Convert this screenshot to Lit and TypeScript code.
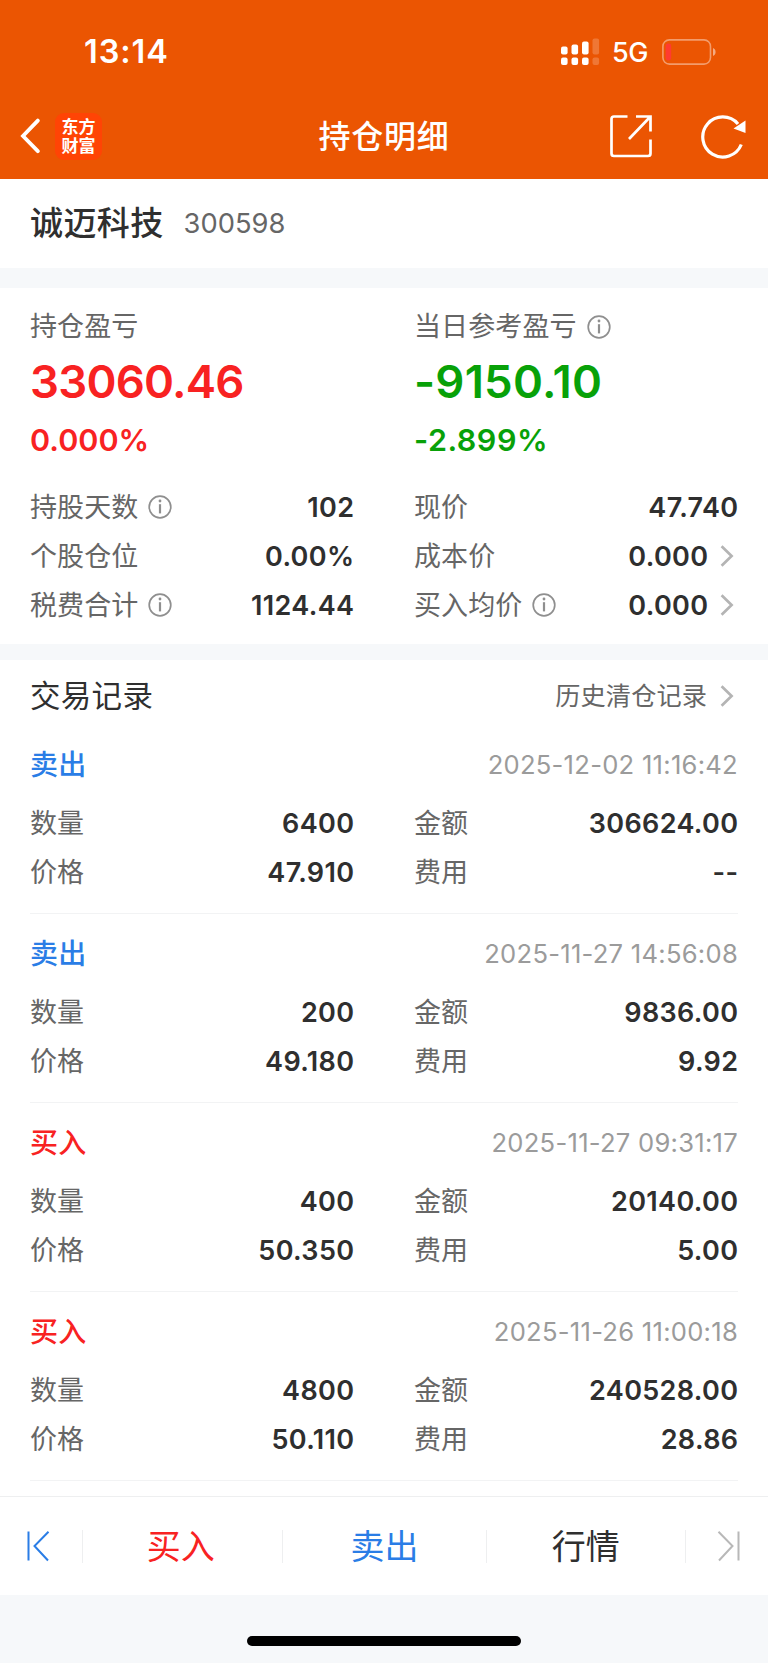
import { LitElement, html, css, svg, nothing } from "lit";
import { customElement } from "lit/decorators.js";

interface Field {
  label: string;
  value: string;
  info?: boolean;
  link?: boolean;
}
interface Trade {
  side: "buy" | "sell";
  time: string;
  qty: string;
  amount: string;
  price: string;
  fee: string;
}

const HOLDING: Field[] = [
  { label: "持股天数", value: "102", info: true },
  { label: "现价", value: "47.740" },
  { label: "个股仓位", value: "0.00%" },
  { label: "成本价", value: "0.000", link: true },
  { label: "税费合计", value: "1124.44", info: true },
  { label: "买入均价", value: "0.000", info: true, link: true },
];

const TRADES: Trade[] = [
  { side: "sell", time: "2025-12-02 11:16:42", qty: "6400", amount: "306624.00", price: "47.910", fee: "--" },
  { side: "sell", time: "2025-11-27 14:56:08", qty: "200", amount: "9836.00", price: "49.180", fee: "9.92" },
  { side: "buy", time: "2025-11-27 09:31:17", qty: "400", amount: "20140.00", price: "50.350", fee: "5.00" },
  { side: "buy", time: "2025-11-26 11:00:18", qty: "4800", amount: "240528.00", price: "50.110", fee: "28.86" },
];

const infoIcon = html`<svg class="info" width="24" height="24" viewBox="0 0 24 24" fill="none" stroke="#8f8f8f" stroke-width="1.7">
  <circle cx="12" cy="12" r="10.8" />
  <path d="M12 9.2v9.2" stroke-width="2.2" />
  <circle cx="12" cy="6" r="1.4" fill="#8f8f8f" stroke="none" />
</svg>`;

const chevron = html`<svg class="chevron" width="32" height="24" viewBox="0 0 32 24" fill="none" stroke="#b4b4b4" stroke-width="2.7">
  <path d="M13.6 2.2 23.6 12 13.6 21.8" />
</svg>`;

@customElement("app-root")
export class AppRoot extends LitElement {
  static styles = css`
    :host {
      display: flex;
      flex-direction: column;
      height: 1663px;
      background: #f6f8fa;
      color: #2f2f2f;
      font-family: Inter, "Noto Sans CJK SC", sans-serif;
      font-size: 27px;
    }
    svg { display: block; flex: none; }
    header { background: #eb5502; color: #fff; height: 179px; box-sizing: border-box; }
    .status { display: flex; align-items: center; height: 103px; padding: 0 52px 0 84px; }
    .clock { flex: 1; font-size: 32.5px; font-weight: 600; line-height: 40px; letter-spacing: 0.9px; }
    .net { font-size: 27px; font-weight: 500; line-height: 40px; margin: 2px 14px 0 12px; letter-spacing: -0.4px; }
    .nav { display: grid; grid-template-columns: 1fr auto 1fr; align-items: center; height: 66px; }
    .nav-left { display: flex; align-items: center; padding-left: 19px; gap: 14px; }
    .logo {
      display: flex; flex-direction: column; justify-content: center; align-items: center; box-sizing: border-box;
      width: 47px; height: 47px; padding-bottom: 2px; border-radius: 9px; background: #ff4405;
      font-family: "Noto Sans CJK SC", sans-serif; font-weight: 700; font-size: 17px; line-height: 19.5px;
    }
    .title { font-size: 32px; font-weight: 500; letter-spacing: 0.8px; line-height: 48px; padding-top: 2px; }
    .nav-right { display: flex; align-items: center; justify-content: flex-end; gap: 47px; padding-right: 22px; }
    .stock { display: flex; align-items: center; height: 89px; box-sizing: border-box; padding: 0 30px; background: #fff; line-height: 87px; }
    .stock-name { font-size: 33px; font-weight: 500; letter-spacing: 0.4px; }
    .stock-code { font-size: 27.3px; color: #666; margin-left: 20px; }
    .summary { margin-top: 20px; background: #fff; padding: 15px 30px; }
    .two { display: grid; grid-template-columns: 324px 324px; column-gap: 60px; }
    .label { display: flex; align-items: center; color: #666; letter-spacing: 0.1px; }
    .head .label { height: 48px; line-height: 48px; }
    .info { margin-left: 10px; }
    .big { font-size: 45.5px; font-weight: 600; line-height: 62px; }
    .big.rise { letter-spacing: -0.75px; }
    .big.fall { letter-spacing: 0.2px; }
    .pct { font-size: 30.5px; font-weight: 600; line-height: 53px; margin-bottom: 1px; }
    .pct.fall { letter-spacing: 0.5px; }
    .rise { color: #f82222; }
    .fall { color: #08a108; }
    .fields { line-height: 49px; }
    .summary .fields { margin-top: 15px; }
    .field { display: flex; align-items: center; height: 49px; }
    .summary .field { padding-top: 1px; box-sizing: border-box; }
    .value { margin-left: auto; margin-right: -0.4px; font-weight: 600; letter-spacing: 0.35px; }
    .chevron { margin-right: -2px; }
    .records { margin-top: 16px; background: #fff; height: 836px; }
    .records-head { display: flex; align-items: center; height: 65px; box-sizing: border-box; padding: 7px 30px 0; }
    .records-title { flex: 1; font-size: 30.5px; letter-spacing: 0.3px; line-height: 40px; margin-top: -1px; }
    .history { display: flex; align-items: center; font-size: 25.2px; letter-spacing: 0.1px; color: #666; }
    .history .text { line-height: 36px; margin: -1px 1px 0 0; }
    .trade { margin: 0 30px; padding: 15px 0 16px; border-bottom: 1px solid #f2f3f4; }
    .trade-head { display: flex; align-items: center; justify-content: space-between; height: 49px; margin-bottom: 10px; }
    .side { font-size: 28px; font-weight: 500; line-height: 40px; margin-top: 1px; letter-spacing: 0.3px; }
    .sell { color: #2a7de6; }
    .buy { color: #f82222; }
    .time { font-size: 25.6px; color: #9b9b9b; letter-spacing: 0.26px; margin-top: -1px; }
    .bar { display: flex; align-items: center; height: 99px; box-sizing: border-box; border-top: 1px solid #eeeff0; background: #fff; font-size: 34px; }
    .edge { width: 82px; display: flex; align-items: center; box-sizing: border-box; }
    .edge.first { justify-content: flex-start; padding-left: 27px; }
    .edge.last { justify-content: flex-end; padding-right: 28px; }
    .tab { flex: 203 1 0; display: flex; justify-content: center; line-height: 33px; border-left: 1px solid #eeeff0; }
    .tab.start { flex-grow: 196; padding-right: 4px; }
    .tab.end { flex-grow: 199; border-right: 1px solid #eeeff0; }
    .home { width: 274px; height: 10px; border-radius: 5px; background: #000; margin: 41px auto 0; }
  `;

  private field(f: Field) {
    return html`<div class="field">
      <span class="label">${f.label}${f.info ? infoIcon : nothing}</span>
      <span class="value">${f.value}</span>
      ${f.link ? chevron : nothing}
    </div>`;
  }

  private trade(t: Trade) {
    return html`<article class="trade">
      <div class="trade-head">
        <span class="side ${t.side}">${t.side === "buy" ? "买入" : "卖出"}</span>
        <span class="time">${t.time}</span>
      </div>
      <div class="two fields">
        ${this.field({ label: "数量", value: t.qty })}
        ${this.field({ label: "金额", value: t.amount })}
        ${this.field({ label: "价格", value: t.price })}
        ${this.field({ label: "费用", value: t.fee })}
      </div>
    </article>`;
  }

  private signal() {
    const tops = [46, 44, 41, 38];
    return svg`${tops.map(
      (y, i) => svg`<g fill="#fff" opacity=${i === 3 ? 0.2 : 1}>
        <rect x=${i * 10.5} y=${y - 37.5} width="6.6" height=${54 - y} rx="2" />
        <rect x=${i * 10.5} y="19.6" width="6.6" height="7.4" rx="2" />
      </g>`
    )}`;
  }

  render() {
    return html`
      <header>
        <div class="status">
          <span class="clock">13:14</span>
          <svg width="39" height="28" viewBox="0 0 39 28">${this.signal()}</svg>
          <span class="net">5G</span>
          <svg width="54" height="26" viewBox="0 0 54 26" fill="none">
            <rect x="0.9" y="0.9" width="47.6" height="24.2" rx="6.5" stroke="#fff" stroke-opacity="0.42" stroke-width="1.6" />
            <rect x="3.6" y="4.5" width="5.6" height="17" rx="2.4" fill="#ff3b30" />
            <path d="M51 9v8c1.7-.7 2.6-2.2 2.6-4S52.7 9.7 51 9z" fill="#fff" fill-opacity="0.5" />
          </svg>
        </div>
        <div class="nav">
          <div class="nav-left">
            <svg width="22" height="36" viewBox="0 0 22 36" fill="none" stroke="#fff" stroke-width="3.8" stroke-linecap="round">
              <path d="M18.8 2.6 4 18 18.8 33.2" />
            </svg>
            <div class="logo"><span>东方</span><span>财富</span></div>
          </div>
          <div class="title">持仓明细</div>
          <div class="nav-right">
            <svg width="44" height="44" viewBox="0 0 44 44" fill="none" stroke="#fff" stroke-width="2.7">
              <path d="M18.5 2.5H5Q2.5 2.5 2.5 5V39.500Q2.500 42 5 42H39Q41.500 42 41.500 39.500V25.500" />
              <path d="M27 2.500H41.500V17.500M41 3 20 25" />
            </svg>
            <svg width="46" height="46" viewBox="0 0 46 46" fill="none">
              <path d="M41.3 31.500A20 20 0 1 1 38 11" stroke="#fff" stroke-width="3.2" />
              <path d="M45.500 7.500V20L33.500 15.500z" fill="#fff" />
            </svg>
          </div>
        </div>
      </header>

      <section class="stock">
        <span class="stock-name">诚迈科技</span><span class="stock-code">300598</span>
      </section>

      <section class="summary">
        <div class="two head">
          <div>
            <div class="label"><span>持仓盈亏</span></div>
            <div class="big rise">33060.46</div>
            <div class="pct rise">0.000%</div>
          </div>
          <div>
            <div class="label"><span>当日参考盈亏</span>${infoIcon}</div>
            <div class="big fall">-9150.10</div>
            <div class="pct fall">-2.899%</div>
          </div>
        </div>
        <div class="two fields">${HOLDING.map((f) => this.field(f))}</div>
      </section>

      <section class="records">
        <div class="records-head">
          <span class="records-title">交易记录</span>
          <span class="history"><span class="text">历史清仓记录</span>${chevron}</span>
        </div>
        ${TRADES.map((t) => this.trade(t))}
      </section>

      <nav class="bar">
        <div class="edge first">
          <svg width="24" height="32" viewBox="0 0 24 32" fill="none" stroke="#2a7de6" stroke-width="2">
            <path d="M1.5 1.5V30.5M21.5 1.8 7.5 16 21 30.5" />
          </svg>
        </div>
        <div class="tab start buy">买入</div>
        <div class="tab sell">卖出</div>
        <div class="tab end">行情</div>
        <div class="edge last">
          <svg width="24" height="32" viewBox="0 0 24 32" fill="none" stroke="#b8b8b8" stroke-width="2">
            <path d="M22.5 1.5V30.5M2.5 1.8 16.5 16 3 30.5" />
          </svg>
        </div>
      </nav>
      <div class="home"></div>
    `;
  }
}
